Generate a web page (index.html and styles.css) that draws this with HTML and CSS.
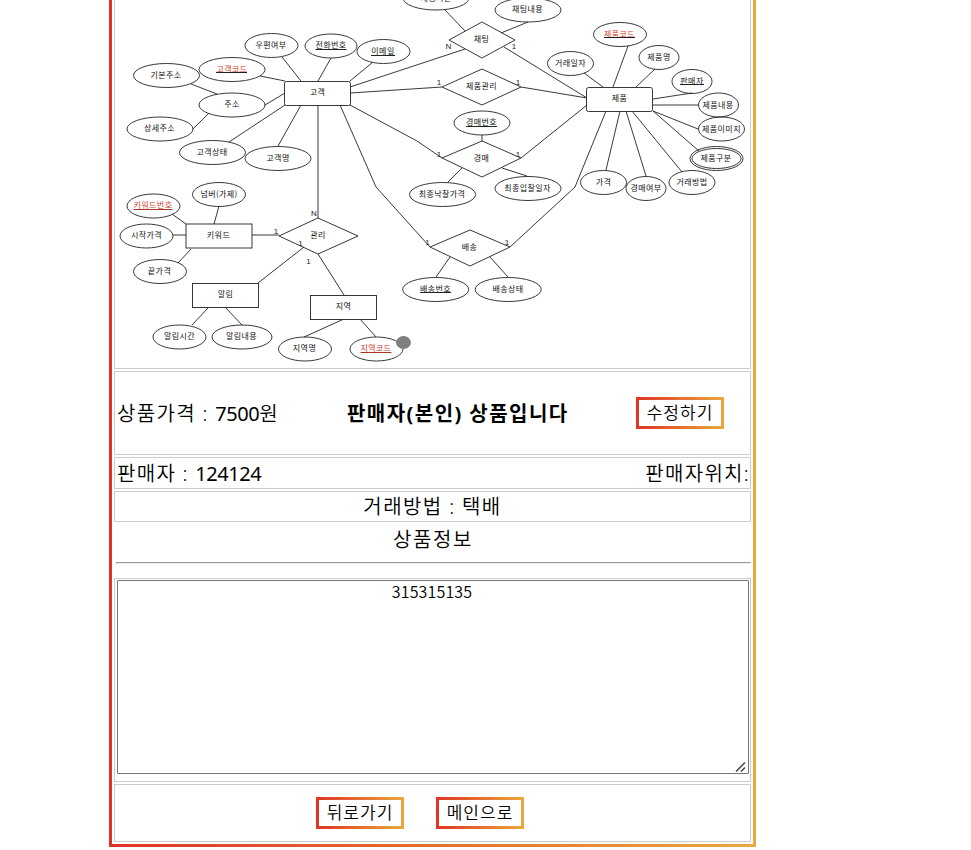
FILE: index.html
```
<!DOCTYPE html>
<html lang="ko">
<head>
<meta charset="utf-8">
<title>상품정보</title>
<link rel="stylesheet" href="styles.css">
</head>
<body>
<main class="product">
  <div class="cell photo">
    <svg class="erd" viewBox="115 0 635 368" width="635" height="368">
      <g class="lines">
        <path d="M282 57 301 81M331 58 318 81M373 62 350 81M260 76 285 81M191 84 217 94M265 105 285 93M209 113 193 129M229 142 285 105M278 146 301 105"/>
        <path d="M444 9 465 31M528 22 501 33M465 49 350 87M504 47 587 98M350 93 442 87M521 87 587 98M350 105 417 141 442 158M482 135V141M521 158 587 105M462 168 448 182M502 168 527 176"/>
        <path d="M340 105 376 187 430 247M606 111 575 187 510 247M450 257 436 277M490 257 508 277"/>
        <path d="M628 46 613 87M584 73 603 87M655 69 636 87M692 93 653 99M653 105H698M653 111 698 129M653 111 699 151M620 111 606 170M626 111 646 176M632 111 682 172"/>
        <path d="M318 105V218M219 206 214 224M172 214 186 224M173 235H186M191 249 178 263M252 235H279M304 247 258 283M209 307 192 325M225 307 242 325M318 254 344 295M344 319 304 337M360 319 376 337"/>
        <path d="M482 22 515 40 482 58 449 40ZM482 69 521 87 482 105 442 87ZM482 141 521 158 482 177 442 158ZM470 230 510 247 470 266 430 247ZM318 218 358 236 318 254 279 236Z"/>
      </g>
      <g class="boxes">
        <rect x="284.5" y="81.500" width="66" height="24" rx="2"/>
        <rect x="586.500" y="87.500" width="66" height="24" rx="2"/>
        <rect x="186" y="224" width="66" height="24"/>
        <rect x="192.500" y="283.500" width="66" height="24"/>
        <rect x="310.500" y="295.500" width="66" height="24"/>
      </g>
      <g class="ovals">
        <ellipse cx="436" cy="-2" rx="33" ry="12"/>
        <ellipse cx="528" cy="10" rx="33" ry="12"/>
        <ellipse cx="271.500" cy="45.500" rx="26.500" ry="12"/>
        <ellipse cx="331" cy="46" rx="26" ry="12"/>
        <ellipse cx="383.500" cy="51.500" rx="26.500" ry="12"/>
        <ellipse cx="232" cy="69.500" rx="33" ry="12"/>
        <ellipse cx="166.500" cy="75.500" rx="33" ry="12"/>
        <ellipse cx="232" cy="105" rx="33" ry="12"/>
        <ellipse cx="160" cy="129" rx="33" ry="12"/>
        <ellipse cx="212.500" cy="152.500" rx="33" ry="12"/>
        <ellipse cx="278" cy="158.500" rx="33" ry="12"/>
        <ellipse cx="219" cy="194.500" rx="26.500" ry="12"/>
        <ellipse cx="153.500" cy="206" rx="26.500" ry="12"/>
        <ellipse cx="146.500" cy="236" rx="26.500" ry="12"/>
        <ellipse cx="160" cy="271.500" rx="26.500" ry="12"/>
        <ellipse cx="179.500" cy="337" rx="26.500" ry="12"/>
        <ellipse cx="242" cy="337" rx="30" ry="12"/>
        <ellipse cx="305" cy="349" rx="26.500" ry="12"/>
        <ellipse cx="376.500" cy="349" rx="26.500" ry="12"/>
        <ellipse cx="482" cy="123" rx="28" ry="12"/>
        <ellipse cx="442.500" cy="194.500" rx="33" ry="12"/>
        <ellipse cx="528" cy="188.500" rx="33" ry="12"/>
        <ellipse cx="435.700" cy="289.500" rx="33" ry="12"/>
        <ellipse cx="508.200" cy="289.500" rx="33" ry="12"/>
        <ellipse cx="620" cy="34.500" rx="26.500" ry="12"/>
        <ellipse cx="570.500" cy="63.500" rx="23" ry="12"/>
        <ellipse cx="659" cy="57.500" rx="20" ry="12"/>
        <ellipse cx="692" cy="81.500" rx="20" ry="12"/>
        <ellipse cx="718.500" cy="105" rx="20" ry="12"/>
        <ellipse cx="721.500" cy="129" rx="23" ry="12"/>
        <ellipse cx="716.500" cy="158.500" rx="26.500" ry="12"/>
        <ellipse cx="716.500" cy="158.500" rx="24.500" ry="10"/>
        <ellipse cx="603.500" cy="182.500" rx="23" ry="12"/>
        <ellipse cx="646" cy="188.500" rx="20" ry="12"/>
        <ellipse cx="692" cy="182.500" rx="23" ry="12"/>
      </g>
      <ellipse class="handle" cx="403.500" cy="342.500" rx="7.500" ry="6.500"/>
      <g class="names">
        <text x="436" y="1">채팅시간</text>
        <text x="527.500" y="12">채팅내용</text>
        <text x="271" y="48">우편여부</text>
        <text x="331" y="48">전화번호</text>
        <text x="383" y="54">이메일</text>
        <text x="232" y="71.500" class="key">고객코드</text>
        <text x="166" y="77.500">기본주소</text>
        <text x="232" y="107">주소</text>
        <text x="159.500" y="131">상세주소</text>
        <text x="212" y="155">고객상태</text>
        <text x="278" y="161">고객명</text>
        <text x="317.500" y="95">고객</text>
        <text x="219" y="196.500">넘버(가제)</text>
        <text x="153" y="208" class="key">키워드번호</text>
        <text x="146.500" y="238">시작가격</text>
        <text x="159.500" y="273.500">끝가격</text>
        <text x="218.500" y="238">키워드</text>
        <text x="225.500" y="297">알림</text>
        <text x="179.500" y="339">알림시간</text>
        <text x="241.500" y="339">알림내용</text>
        <text x="318" y="238">관리</text>
        <text x="343.500" y="309">지역</text>
        <text x="304.500" y="351">지역명</text>
        <text x="376" y="351" class="key">지역코드</text>
        <text x="481.500" y="42">채팅</text>
        <text x="481.500" y="89">제품관리</text>
        <text x="481.500" y="125">경매번호</text>
        <text x="481.500" y="161">경매</text>
        <text x="442" y="196.500">최종낙찰가격</text>
        <text x="527.500" y="190.500">최종입찰일자</text>
        <text x="469.500" y="250">배송</text>
        <text x="435.500" y="291.500">배송번호</text>
        <text x="508" y="291.500">배송상태</text>
        <text x="619.500" y="36.500" class="key">제품코드</text>
        <text x="570.500" y="65.500">거래일자</text>
        <text x="659" y="59.500">제품명</text>
        <text x="692" y="83.500">판매자</text>
        <text x="718" y="107.500">제품내용</text>
        <text x="721.500" y="131.500">제품이미지</text>
        <text x="716" y="161">제품구분</text>
        <text x="619.500" y="101">제품</text>
        <text x="603.500" y="184.500">가격</text>
        <text x="646" y="190.500">경매여부</text>
        <text x="692" y="184.500">거래방법</text>
      </g>
      <g class="counts">
        <text x="448.500" y="49">N</text><text x="514" y="49">1</text>
        <text x="439" y="85">1</text><text x="518" y="85">1</text>
        <text x="439" y="157">1</text><text x="518" y="157">1</text>
        <text x="427.500" y="245">1</text><text x="507" y="245">1</text>
        <text x="314" y="215.500">N</text><text x="276" y="233.500">1</text>
        <text x="300.500" y="245.500">1</text><text x="308.500" y="263.500">1</text>
      </g>
      <path class="underline" d="M315.500 49.500h31M371 55.500h24M216 72.500h31M466 126.500h31M420 292.500h31M604 37.500h31M680 84.500h24"/>
      <path class="underline red" d="M133.500 209.500h39M360.500 352.500h31"/>
    </svg>
  </div>
  <div class="cell price">
    <span class="amount">상품가격 : <span class="num">7500</span>원</span>
    <strong class="owner">판매자(본인) 상품입니다</strong>
    <button class="btn">수정하기</button>
  </div>
  <div class="cell seller"><span>판매자 : <span class="num">124124</span></span><span class="place">판매자위치:</span></div>
  <div class="cell method">거래방법 : 택배</div>
  <div class="heading">상품정보</div>
  <hr class="rule">
  <div class="cell detail">
    <textarea class="info" readonly>315315135</textarea>
    <svg class="grip" viewBox="0 0 12 12" width="12" height="12"><path d="M1 10.500 10 1.500M6 10.500 10 6.500"/></svg>
  </div>
  <div class="cell actions"><button class="btn">뒤로가기</button><button class="btn">메인으로</button></div>
</main>
</body>
</html>
```
FILE: styles.css
```
* { box-sizing: border-box; }
body {
  margin: 0;
  background: #fff;
  color: #000;
  font-family: "Noto Sans", "Noto Sans CJK KR", sans-serif;
  font-size: 20px;
}
.product {
  width: 647px;
  height: 847px;
  margin-left: 109px;
  padding: 0 2px 2px;
  display: flex;
  flex-direction: column;
  gap: 2px;
  border: 3px solid;
  border-top: 0;
  border-image: linear-gradient(to right, #e03326, #eaa83c) 3;
}
.cell { border: 1px solid #ccc; flex: none; }
.photo { height: 369px; border-top: 0; }
.erd { display: block; }
.lines, .boxes, .ovals { fill: none; stroke: #222; stroke-width: 0.9; }
.boxes { fill: #fff; }
.handle { fill: #808080; }
.names { font: 8px "Noto Sans CJK KR", sans-serif; letter-spacing: 0.4px; text-anchor: middle; fill: #111; }
.names .key { fill: #d4442c; }
.counts { font: 8px "Liberation Sans", sans-serif; text-anchor: middle; fill: #222; }
.underline { stroke: #222; stroke-width: 1; }
.red { stroke: #a8372a; }
.price {
  height: 84px;
  display: grid;
  grid-template-columns: 230px 1fr 88px;
  align-items: center;
  padding: 0 26px 0 2px;
}
.amount, .owner { margin-top: -2px; white-space: nowrap; }
.amount { font-weight: 350; letter-spacing: 1.35px; }
.num { font-weight: 400; letter-spacing: -0.45px; }
.owner { letter-spacing: 1.45px; }
.btn {
  width: 88px;
  height: 32px;
  padding: 0 0 2px;
  border: 3px solid;
  border-image: linear-gradient(to right, #e03326, #eaa83c) 3;
  background: #fff;
  color: #000;
  font: 350 17px/24px "Noto Sans CJK KR", sans-serif;
  letter-spacing: 1px;
}
.seller {
  height: 32px;
  display: flex;
  justify-content: space-between;
  align-items: center;
  padding: 0 0 2px 2px;
  font-weight: 350;
  letter-spacing: 1.3px;
}
.method { height: 31px; line-height: 30px; text-align: center; font-weight: 350; letter-spacing: 1.4px; }
.heading { height: 31px; line-height: 32px; padding-left: 1px; text-align: center; font-weight: 350; letter-spacing: 1.6px; }
.rule { width: 635px; margin: 5px 0 12px 2px; flex: none; }
.detail { position: relative; height: 204px; padding: 1px 1px 0 2px; }
.info {
  display: block;
  width: 632px;
  height: 194px;
  margin: 0;
  padding: 0 4px 2px 2px;
  border: 1px solid #767676;
  border-radius: 1px;
  font: 350 16px/20px "Noto Sans CJK KR", sans-serif;
  letter-spacing: 0.15px;
  text-align: center;
  resize: none;
}
.grip { position: absolute; right: 3px; bottom: 8px; fill: none; stroke: #444; stroke-width: 1.5; }
.actions { height: 58px; display: flex; justify-content: center; align-items: center; gap: 32px; padding-right: 25px; }
```
